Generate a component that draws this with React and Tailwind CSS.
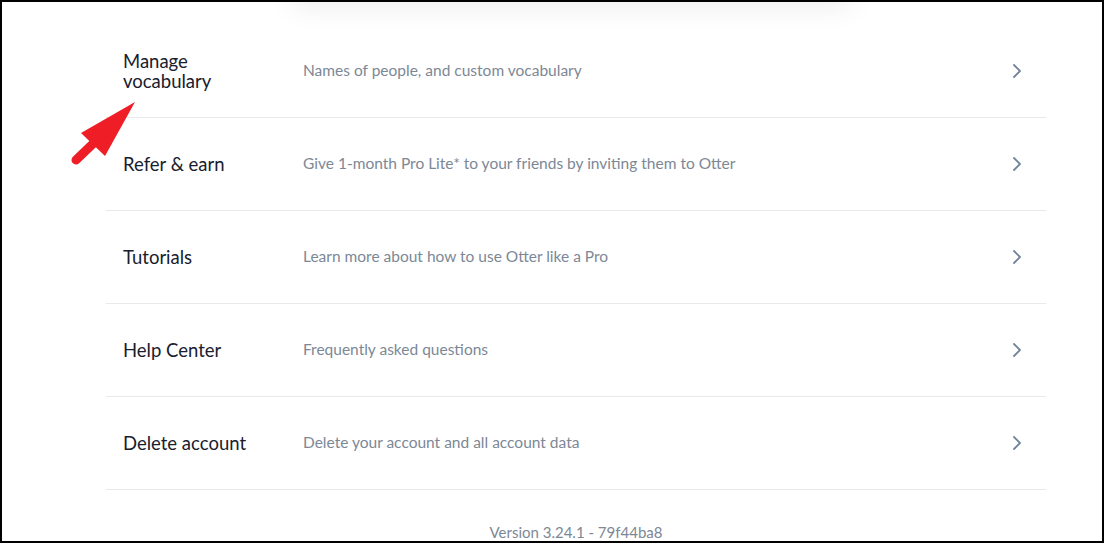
import React from "react";

const rows = [
  { title: ["Manage", "vocabulary"], desc: "Names of people, and custom vocabulary" },
  { title: ["Refer & earn"], desc: "Give 1-month Pro Lite* to your friends by inviting them to Otter" },
  { title: ["Tutorials"], desc: "Learn more about how to use Otter like a Pro" },
  { title: ["Help Center"], desc: "Frequently asked questions" },
  { title: ["Delete account"], desc: "Delete your account and all account data" },
];

function Chevron() {
  return (
    <svg width="10" height="16" viewBox="0 0 10 16" fill="none">
      <path d="M2 2l6 6-6 6" stroke="#71849a" strokeWidth="1.8" strokeLinecap="round" strokeLinejoin="round" />
    </svg>
  );
}

export default function App() {
  return (
    <div
      className="relative w-[1104px] h-[543px] overflow-hidden bg-white border-2 border-black"
      style={{ fontFamily: "Lato, 'Noto Sans', sans-serif" }}
    >
      <div className="absolute left-[290px] top-[-100px] w-[560px] h-[100px] bg-white rounded-lg shadow-[0_6px_28px_rgba(0,0,0,0.07)]" />
      <div className="ml-[104px] mt-[23px] w-[940px] flex flex-col">
        {rows.map((r, i) => (
          <div
            key={i}
            className="h-[93px] flex items-center border-b border-[#e9e9eb] pl-[17px] pr-[24px]"
          >
            <div className="w-[180px] text-[18.5px] leading-[20px] text-[#18202e]">
              {r.title.map((t, j) => (
                <div key={j}>{t}</div>
              ))}
            </div>
            <div className="flex-1 text-[15.5px] text-[#7c8896]">{r.desc}</div>
            <Chevron />
          </div>
        ))}
      </div>
      <div className="mt-[31px] text-center text-[15px] text-[#7c8896] pl-[48px]">
        Version 3.24.1 - 79f44ba8
      </div>
      <svg
        className="absolute left-0 top-0 pointer-events-none"
        width="200"
        height="200"
        viewBox="0 0 200 200"
      >
        <line x1="74" y1="158" x2="98" y2="135" stroke="#ee1d26" strokeWidth="9" strokeLinecap="round" />
        <polygon points="133,100 79,131 103,154" fill="#ee1d26" />
      </svg>
    </div>
  );
}
